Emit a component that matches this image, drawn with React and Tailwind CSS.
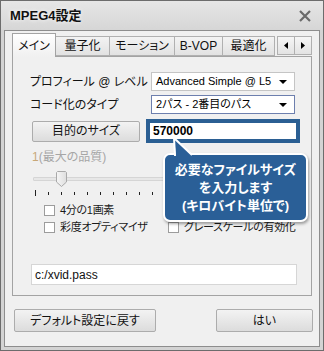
import React from "react";

const tabs = ["量子化", "モーション", "B-VOP", "最適化"];
const ticks = Array.from({ length: 21 }, (_, i) => i);

function Select({ value, focused }) {
  return (
    <div
      className={
        "h-[19px] w-[144px] bg-white flex items-center justify-between pl-[4px] pr-[7px] border " +
        (focused ? "border-[#6d7fae]" : "border-[#c5c5c5]")
      }
    >
      <span className="text-[11px] leading-none text-black">{value}</span>
      <svg width="8" height="4" viewBox="0 0 8 4">
        <polygon points="0,0 8,0 4,4" fill="#000" />
      </svg>
    </div>
  );
}

function Check({ label, className = "" }) {
  return (
    <div className={"flex items-center gap-[5px] " + className}>
      <div className="w-[11px] h-[11px] bg-white border border-[#9c9c9c]" />
      <span className="text-[11px] tracking-[-0.3px] leading-none text-[#1a1a1a]">{label}</span>
    </div>
  );
}

export default function App() {
  return (
    <div className="relative w-[324px] h-[351px] border border-[#6c6c6c] bg-[#d3d3d3] px-[3px] pb-[3px] flex flex-col whitespace-nowrap font-['Liberation_Sans','Noto_Sans_CJK_JP',sans-serif] [font-feature-settings:'palt'] select-none">
      {/* title bar */}
      <div className="h-[29px] flex items-center justify-between bg-gradient-to-b from-[#e6e6e6] to-[#d6d6d6] -mx-[3px] px-[9px]">
        <span className="text-[13px] font-bold text-[#111] [text-shadow:0_0_4px_#fff]">MPEG4設定</span>
        <svg width="14" height="14" viewBox="0 0 14 14" className="mr-[2px]">
          <path d="M2 2 L12 12 M12 2 L2 12" stroke="#6a6a6a" strokeWidth="2.2" />
        </svg>
      </div>

      {/* content */}
      <div className="flex-1 border border-[#8d8d8d] bg-[#f0f0f0] flex flex-col">
        {/* tab strip */}
        <div className="flex items-end h-[25px] pl-[7px]">
          <div className="h-[24px] w-[44px] flex items-center justify-center border border-b-0 border-[#a3a3a3] bg-gradient-to-b from-[#ffffff] to-[#f0f0f0] text-[12px] text-[#111] relative z-10 -mb-[1px]">
            メイン
          </div>
          {tabs.map((t, i) => (
            <div
              key={t}
              className={
                "h-[20px] flex items-center justify-center border border-l-0 border-[#b0b0b0] bg-gradient-to-b from-[#f3f3f3] to-[#e2e2e2] text-[12px] text-[#111] " +
                (i === 0 ? "w-[54px]" : i === 1 ? "w-[65px]" : i === 2 ? "w-[48px]" : "w-[52px]")
              }
            >
              {t}
            </div>
          ))}
          <div className="ml-[2px] flex mb-[1px]">
            <div className="h-[19px] w-[18px] flex items-center justify-center border border-[#b0b0b0] bg-gradient-to-b from-[#f6f6f6] to-[#e3e3e3]">
              <svg width="4" height="7" viewBox="0 0 4 7">
                <polygon points="4,0 4,7 0,3.5" fill="#000" />
              </svg>
            </div>
            <div className="h-[19px] w-[17px] flex items-center justify-center border border-l-0 border-[#b0b0b0] bg-gradient-to-b from-[#f6f6f6] to-[#e3e3e3]">
              <svg width="4" height="7" viewBox="0 0 4 7">
                <polygon points="0,0 0,7 4,3.5" fill="#000" />
              </svg>
            </div>
          </div>
        </div>

        {/* panel */}
        <div className="ml-[7px] w-[300px] h-[240px] border border-[#a3a3a3] bg-[#f0f0f0] flex flex-col pt-[15px] pl-[17px]">
          <div className="flex items-center">
            <span className="w-[121px] text-[12px] text-[#111]">プロフィール @ レベル</span>
            <Select value="Advanced Simple @ L5" />
          </div>
          <div className="flex items-center mt-[4px]">
            <span className="w-[121px] text-[12px] text-[#111]">コード化のタイプ</span>
            <Select value="2パス - 2番目のパス" focused />
          </div>
          <div className="flex items-center mt-[5px]">
            <div className="ml-[2px] w-[108px] h-[21px] flex items-center justify-center rounded-[2px] border border-[#acacac] bg-gradient-to-b from-[#f3f3f3] to-[#dcdcdc] text-[12px] text-[#111]">
              目的のサイズ
            </div>
            <div className="ml-[6px] w-[154px] h-[24px] border-[4px] border-[#2b5f93] bg-white flex items-center pl-[3px]">
              <span className="text-[12px] font-bold text-black">570000</span>
            </div>
          </div>

          {/* slider */}
          <div className="flex mt-[7px] ml-[2px] h-[14px]">
            <span className="text-[12px] leading-[14px] text-[#a6a6a6]">
              <span className="text-[#c8a878]">1</span>(最大の品質)
            </span>
          </div>
          <div className="relative h-[16px] mt-[7px] ml-[3px] w-[264px] flex items-center">
            <div className="w-full h-[4px] border border-[#d5d5d5] bg-[#e7e7e7] rounded-[1px]" />
            <svg width="11" height="16" viewBox="0 0 11 16" className="absolute left-[23px] top-0">
              <defs>
                <linearGradient id="th" x1="0" y1="0" x2="1" y2="0">
                  <stop offset="0" stopColor="#f6f6f6" />
                  <stop offset="1" stopColor="#dedede" />
                </linearGradient>
              </defs>
              <polygon points="0.5,1.5 1.5,0.5 9.5,0.5 10.5,1.5 10.5,11 5.5,15.5 0.5,11" fill="url(#th)" stroke="#a9a9a9" />
            </svg>
          </div>
          <div className="flex h-[7px] mt-[2px] ml-[5px] w-[261px] justify-between items-end">
            {ticks.map((i) => (
              <div key={i} className={"w-[1px] bg-[#222] " + (i === 0 ? "h-[6px]" : "h-[3px] mb-[1px]")} />
            ))}
          </div>

          {/* checks */}
          <div className="mt-[9px] ml-[14px]">
            <Check label="4分の1画素" />
          </div>
          <div className="mt-[6px] ml-[14px] flex">
            <Check label="彩度オプティマイザ" className="w-[124px]" />
            <Check label="グレースケールの有効化" />
          </div>

          {/* path */}
          <div className="mt-[31px] ml-[1px] w-[266px] h-[21px] bg-white border border-[#d6d6d6] flex items-center pl-[3px]">
            <span className="text-[12px] text-[#111]">c:/xvid.pass</span>
          </div>
        </div>

        {/* bottom buttons */}
        <div className="flex justify-between mt-[13px] pl-[9px] pr-[6px]">
          <div className="w-[142px] h-[23px] flex items-center justify-center rounded-[2px] border border-[#acacac] bg-gradient-to-b from-[#f3f3f3] to-[#dcdcdc] text-[12px] text-[#111]">
            デフォルト設定に戻す
          </div>
          <div className="w-[97px] h-[23px] flex items-center justify-center rounded-[2px] border border-[#acacac] bg-gradient-to-b from-[#f3f3f3] to-[#dcdcdc] text-[12px] text-[#111]">
            はい
          </div>
        </div>
      </div>

      {/* callout */}
      <div className="absolute left-[162px] top-[152px] w-[145px] h-[69px] rounded-[7px] border-2 border-white bg-[#2a5f97] shadow-[1px_2px_3px_rgba(0,0,0,0.35)] flex flex-col items-center justify-center">
        <span className="text-[13px] leading-[18px] font-bold text-white">必要なファイルサイズ</span>
        <span className="text-[13px] leading-[18px] font-bold text-white">を入力します</span>
        <span className="text-[13px] leading-[18px] font-bold text-white">(キロバイト単位で)</span>
      </div>
      <svg width="26" height="22" viewBox="0 0 26 22" className="absolute left-[168px] top-[134px]">
        <polygon points="5,3 7,21 24,21" fill="#2a5f97" />
        <polyline points="6,21 5,3 23,20" fill="none" stroke="#fff" strokeWidth="2" strokeLinejoin="round" />
      </svg>
    </div>
  );
}
